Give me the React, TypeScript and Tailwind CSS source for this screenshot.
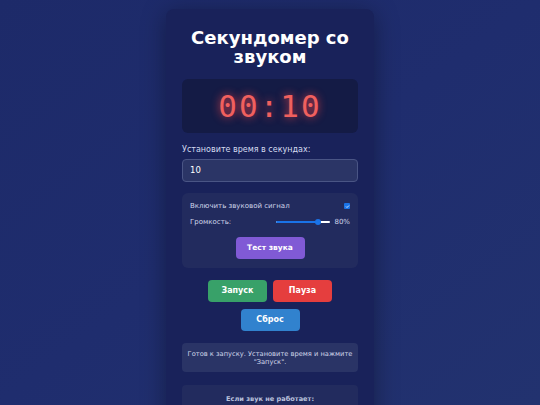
import React from "react";

export default function App() {
  return (
    <div
      className="w-full flex justify-center bg-gradient-to-br from-[#1d2a69] via-[#1f2d6e] to-[#22326f] pt-[9px] overflow-hidden h-[405px]"
      style={{ fontFamily: '"DejaVu Sans", Verdana, sans-serif' }}
    >
      <div className="w-[208px] shrink-0 self-start rounded-[8px] bg-[#19225a] shadow-[0_4px_24px_rgba(0,0,0,0.35)] px-[16px] pt-[16px] pb-[40px] flex flex-col">
        <h1 className="text-white font-bold text-[18px] leading-[19px] text-center mt-[3px]">
          Секундомер со звуком
        </h1>
        <div className="mt-[13px] h-[54px] shrink-0 rounded-[6px] bg-[#141b45] flex items-center justify-center">
          <span
            className="text-[#f0605e] text-[31px] tracking-[2px]"
            style={{
              fontFamily: '"DejaVu Sans Mono", monospace',
              textShadow: "0 0 9px rgba(255,70,70,0.85)",
            }}
          >
            00:10
          </span>
        </div>
        <label className="mt-[11px] text-[8px] leading-[12px] text-[#d6dcf0]">
          Установите время в секундах:
        </label>
        <div className="mt-[3px] h-[23px] shrink-0 rounded-[4px] bg-[#2b3566] border border-[#4a5585] flex items-center px-[7px] text-[8.5px] text-white">
          10
        </div>
        <div className="mt-[11px] rounded-[6px] bg-[#222b5e] px-[8px] pt-[8px] pb-[9px] flex flex-col">
          <div className="flex items-center justify-between text-[7px] text-[#d0d6ea] h-[10px]">
            <span>Включить звуковой сигнал</span>
            <span className="w-[6px] h-[6px] bg-[#1a73e8] rounded-[1px] flex items-center justify-center">
              <svg viewBox="0 0 10 10" className="w-[5px] h-[5px]">
                <path d="M2 5 L4 7 L8 3" stroke="white" strokeWidth="1.6" fill="none" />
              </svg>
            </span>
          </div>
          <div className="mt-[6px] flex items-center justify-between text-[7px] text-[#d0d6ea] h-[10px]">
            <span>Громкость:</span>
            <div className="flex items-center gap-[4px]">
              <div className="relative w-[54px] h-[2px] bg-white rounded-full">
                <div className="absolute left-0 top-0 h-[2px] w-[42px] bg-[#1a73e8] rounded-full" />
                <div className="absolute left-[39px] top-[-2px] w-[6px] h-[6px] rounded-full bg-[#1a73e8]" />
              </div>
              <span>80%</span>
            </div>
          </div>
          <div className="mt-[10px] flex justify-center">
            <button className="w-[69px] h-[22px] rounded-[4px] bg-[#805ad5] text-white font-bold text-[7.5px]">
              Тест звука
            </button>
          </div>
        </div>
        <div className="mt-[12px] flex justify-center gap-[6px]">
          <button className="w-[59px] h-[22px] rounded-[4px] bg-[#38a169] text-white font-bold text-[8px]">
            Запуск
          </button>
          <button className="w-[59px] h-[22px] rounded-[4px] bg-[#e53e3e] text-white font-bold text-[8px]">
            Пауза
          </button>
        </div>
        <div className="mt-[7px] flex justify-center">
          <button className="w-[59px] h-[22px] rounded-[4px] bg-[#3182ce] text-white font-bold text-[8px]">
            Сброс
          </button>
        </div>
        <div className="mt-[12px] rounded-[4px] bg-[#2a3466] h-[29px] shrink-0 flex items-center justify-center text-center text-[6.7px] leading-[8px] text-[#cfd5e8] px-0">
          Готов к запуску. Установите время и нажмите "Запуск".
        </div>
        <div className="mt-[13px] rounded-[4px] bg-[#222b5e] pt-[9px] pb-[30px] text-center text-[6.6px] leading-[10px]">
          <span className="font-bold text-[#b9c1dc]">Если звук не работает:</span>
        </div>
      </div>
    </div>
  );
}
